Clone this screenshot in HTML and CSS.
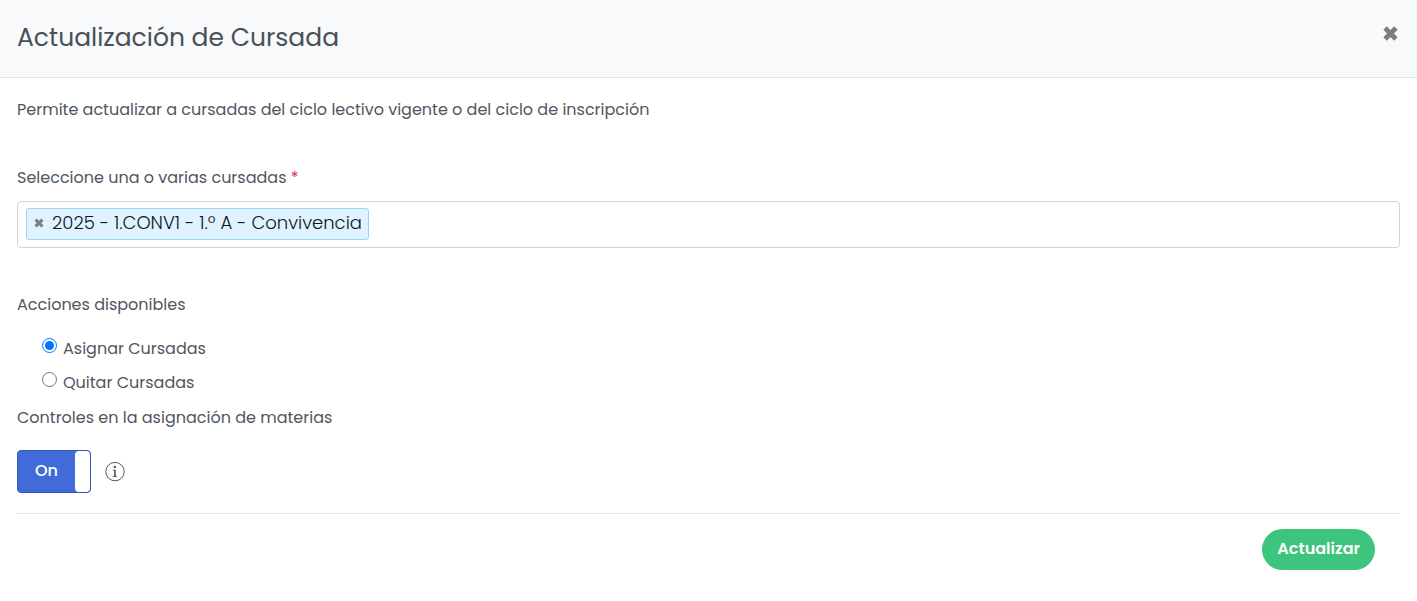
FILE: index.html
```html
<!DOCTYPE html>
<html lang="es">
<head>
    <meta charset="UTF-8">
    <meta name="viewport" content="width=device-width, initial-scale=1.0">
    <title>Actualización de Cursada</title>
    <link rel="stylesheet" href="styles.css">
</head>
<body>
    <header class="modal-header">
        <h1>Actualización de Cursada</h1>
        <button type="button" class="close" aria-label="Cerrar">
            <svg viewBox="0 0 14 14"><path d="M3 3l8 8M11 3l-8 8"/></svg>
        </button>
    </header>
    <form class="modal-body">
        <p class="intro">Permite actualizar a cursadas del ciclo lectivo vigente o del ciclo de inscripción</p>

        <label class="title" for="cursadas">Seleccione una o varias cursadas <span class="required">*</span></label>
        <div class="multiselect">
            <span class="tag">
                <button type="button" class="tag-remove" aria-label="Quitar">
                    <svg viewBox="0 0 14 14"><path d="M3 3l8 8M11 3l-8 8"/></svg>
                </button>
                <span>2025 - 1.CONV1 - 1.º A - Convivencia</span>
            </span>
            <input type="text" id="cursadas" autocomplete="off">
        </div>

        <fieldset class="actions">
            <legend>Acciones disponibles</legend>
            <label class="radio"><input type="radio" name="accion" value="asignar" checked><span>Asignar Cursadas</span></label>
            <label class="radio"><input type="radio" name="accion" value="quitar"><span>Quitar Cursadas</span></label>
        </fieldset>

        <label class="title" for="controles">Controles en la asignación de materias</label>
        <div class="switch-row">
            <label class="switch">
                <input type="checkbox" id="controles" checked>
                <span class="switch-on">On</span>
                <span class="switch-handle"></span>
            </label>
            <svg class="info" viewBox="0 0 20 20">
                <circle cx="10" cy="9.6" r="9.2"/>
                <circle class="dot" cx="9.8" cy="5" r="1.3"/>
                <path class="dot" d="M7.8 7.8h3v6.2l1.3.4v.6H7.7v-.6l1.4-.4V8.8l-1.3-.3z"/>
            </svg>
        </div>

        <div class="modal-footer">
            <button type="submit" class="btn-update">Actualizar</button>
        </div>
    </form>
</body>
</html>
```

FILE: styles.css
```css
* {
    box-sizing: border-box;
}
body {
    margin: 0;
    background: #fff;
    color: #4f565f;
    font-family: Poppins, Inter, sans-serif;
    font-size: 16px;
    line-height: 24px;
}
button,
input {
    font: inherit;
}
.modal-header {
    display: flex;
    justify-content: space-between;
    align-items: flex-start;
    padding: 18px 17px 20px;
    background: #f8f9fb;
    border-bottom: 1px solid #e4e7ea;
}
.modal-header h1 {
    margin: 0;
    font-size: 25px;
    font-weight: 400;
    line-height: 39px;
    color: #495057;
}
.close,
.tag-remove {
    display: flex;
    padding: 0;
    border: none;
    background: none;
    cursor: pointer;
}
.close {
    margin-top: 6px;
}
.close svg {
    width: 19px;
    height: 19px;
}
.close path,
.tag-remove path {
    fill: none;
    stroke: #7b7d7e;
    stroke-width: 3.6;
}
.modal-body {
    padding: 20px 17px;
}
.intro {
    margin: 0 0 44px;
}
.title {
    display: block;
}
.required {
    color: #e0244f;
}
.multiselect {
    display: flex;
    flex-wrap: wrap;
    align-items: center;
    margin: 11px 0 45px;
    padding: 6px 8px 7px;
    border: 1px solid #ced4da;
    border-radius: 4px;
}
.tag {
    display: flex;
    align-items: center;
    gap: 7px;
    padding: 2px 6px 4px;
    border: 1px solid #99d6f8;
    border-radius: 3px;
    background: #e0f2ff;
    color: #0c151c;
    font-size: 18px;
    font-weight: 300;
}
.tag-remove svg {
    width: 12px;
    height: 12px;
}
.multiselect input {
    flex: 1;
    min-width: 40px;
    padding: 0 8px;
    border: none;
    outline: none;
    background: none;
}
.actions {
    margin: 0 0 11px;
    padding: 0;
    border: none;
}
.actions legend {
    margin-bottom: 20px;
    padding: 0;
}
.radio {
    display: flex;
    align-items: flex-start;
    gap: 6px;
    margin-left: 25px;
}
.radio + .radio {
    margin-top: 10px;
}
.radio input {
    width: 15px;
    height: 15px;
    margin: 1px 0 0;
    accent-color: #0075ff;
}
.switch-row {
    display: flex;
    align-items: center;
    gap: 14px;
    margin-top: 20px;
}
.switch {
    position: relative;
    display: flex;
    width: 74px;
    height: 43px;
    border: 1px solid #3159b5;
    border-radius: 4px;
    background: #406bd9;
    color: #fff;
    font-weight: 500;
    line-height: 40px;
    text-align: center;
    cursor: pointer;
}
.switch input {
    position: absolute;
    inset: 0;
    width: 100%;
    height: 100%;
    margin: 0;
    opacity: 0;
    cursor: pointer;
}
.switch-on {
    flex: 1;
}
.switch-handle {
    width: 15px;
    border-radius: 4px;
    background: #fff;
}
.info {
    width: 20px;
    height: 20px;
    fill: none;
    stroke: #55595e;
}
.info .dot {
    fill: #55595e;
    stroke: none;
}
.modal-footer {
    display: flex;
    justify-content: flex-end;
    margin-top: 20px;
    padding: 15px 25px 0;
    border-top: 1px solid #e1e5ec;
}
.btn-update {
    padding: 8px 15px 9px;
    border: none;
    border-radius: 21px;
    background: #3dc47e;
    color: #fff;
    font-weight: 600;
    cursor: pointer;
}
```
